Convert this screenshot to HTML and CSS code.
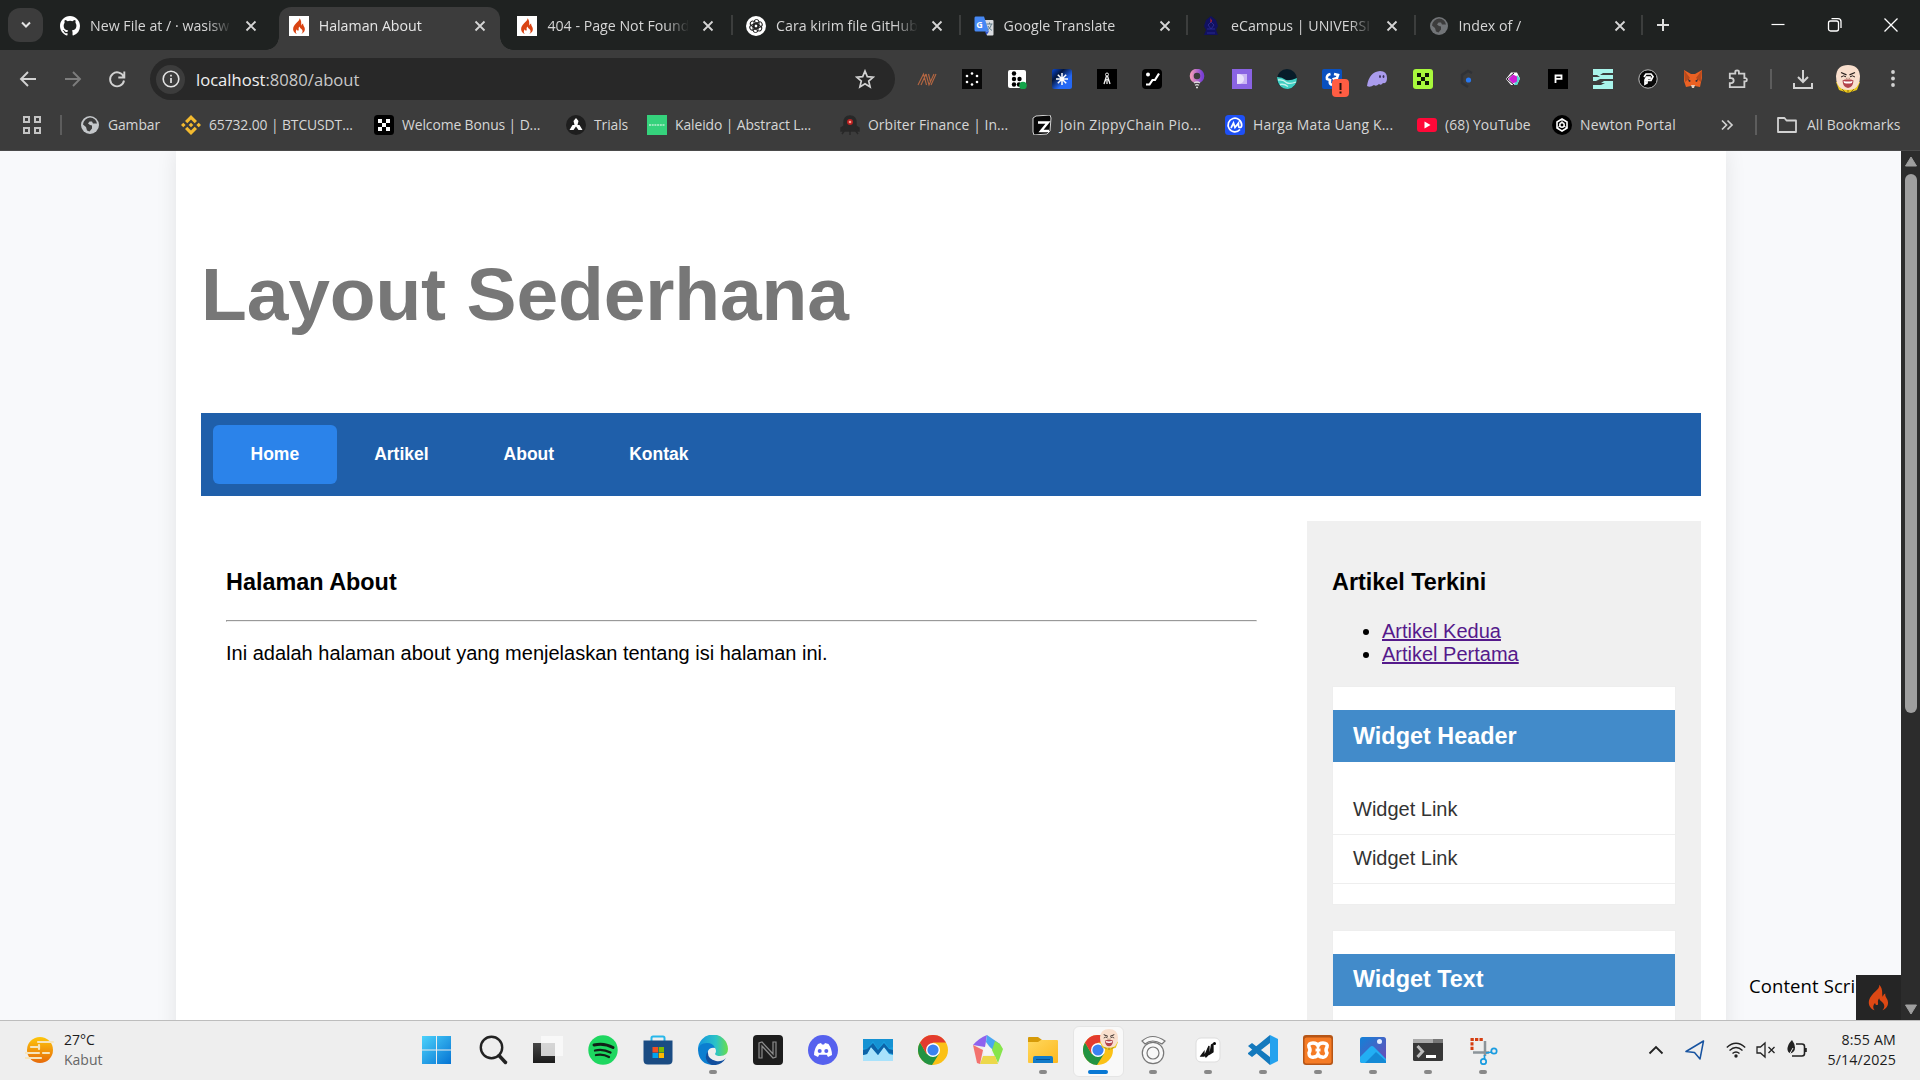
FILE: index.html
```html
<!DOCTYPE html>
<html lang="id">
<head>
<meta charset="utf-8">
<title>Halaman About</title>
<link rel="stylesheet" href="styles.css">
</head>
<body>
<svg class="defs" aria-hidden="true">
  <defs>
    <symbol id="x" viewBox="0 0 20 20"><path d="M5.500 5.500l9 9M14.500 5.500l-9 9" stroke="#d5d5d5" stroke-width="1.800" fill="none"/></symbol>
    <symbol id="flame" viewBox="0 0 20 20"><path d="M10.500.5C11.500 4 4.500 6.500 3 12 2.200 15.500 4 18.500 7.300 19.500 5.500 17.500 6 15.500 7.500 13.800 7.500 15 8.200 15.800 9.300 15.500 10.500 14.500 8.500 13 10.500 10.500 10.500 12.500 14.500 13.500 14.300 16.500 14.200 18 13.500 19 12.700 19.500 16 18.500 17.800 15.500 16.800 12.200 16.200 10.200 14.800 9.500 15 7 13.500 7.500 13.300 9 13.300 9.500 12 8 14 4 10.500.5z"/></symbol>
    <symbol id="fire" viewBox="0 0 20 20"><rect width="20" height="20" fill="#fff"/><use href="#flame" x="1.500" y="1.800" width="17" height="16.500" fill="#d94312"/></symbol>
    <symbol id="globe" viewBox="0 0 20 20"><circle cx="10" cy="10" r="9"/><path d="M10 2.500a7.500 7.500 0 0 1 7 6h-4l-1-2H9.500L8 8.500l2 1.500 2 .5v3l-2.500 3-2.500-1-1-3.500-3-2.500a7.500 7.500 0 0 1 7-7z" fill="#3c3c3c" fill-rule="evenodd"/></symbol>
    <symbol id="chrome" viewBox="0 0 30 30"><circle cx="15" cy="15" r="15" fill="#fbc116"/><path d="M2 7.500a15 15 0 0 0 12 22.500l7.200-11.500L8.500 18.800z" fill="#229342"/><path d="M15 7.500h13A15 15 0 0 0 2 7.500l6.500 11.300z" fill="#e33b2e"/><circle cx="15" cy="15" r="7" fill="#fff"/><circle cx="15" cy="15" r="5.600" fill="#3b82f0"/></symbol>
    <symbol id="face" viewBox="0 0 26 28"><path d="M1 17l3 8 9 3 9-3 3-8z" fill="#e9c71d"/><path d="M7 24l3 3M19 24l-3 3M13 24v4" stroke="#8d6f12"/><path d="M1 11Q2 0 13 0t12 11q0 10-6 13-6 2-12 0Q1 21 1 11z" fill="#f9dfcd"/><path d="M6 7.500l5.500 2.300M20 7.500l-5.500 2.300" stroke="#2a211e" stroke-width="1.300"/><path d="M6 12q2.500-2.200 5-.2M15 11.800q2.500-2 5 .2" stroke="#2a211e" fill="none"/><path d="M7.500 15.500l2.500-1h6l2.500 1q-.5 7-5.500 7.500-5-.5-5.500-7.500z" fill="#b4434d"/><path d="M8.500 16q4.500 1 9 0l-.6 2q-3.900 1-7.800 0z" fill="#fff"/><path d="M12 12.500l-.8 1.500h3.600l-.8-1.500" fill="none" stroke="#b78c78" stroke-width=".8"/></symbol>
    <linearGradient id="win" x1="0" y1="0" x2="1" y2="1"><stop stop-color="#4cd2fb"/><stop offset="1" stop-color="#0573d3"/></linearGradient>
    <linearGradient id="pin"><stop stop-color="#ec95bb"/><stop offset="1" stop-color="#7a3fd6"/></linearGradient>
    <linearGradient id="star" x1="0" y1="0" x2="1" y2="1"><stop stop-color="#0747d8"/><stop offset=".3" stop-color="#03163f"/><stop offset=".65" stop-color="#2468f5"/></linearGradient>
    <linearGradient id="sun" x1="0" y1="0" x2="0" y2="1"><stop stop-color="#fdc60b"/><stop offset="1" stop-color="#e66a0b"/></linearGradient>
    <linearGradient id="edge" x1="0" y1="0" x2="1" y2="0"><stop stop-color="#1494df"/><stop offset=".6" stop-color="#2bc3c7"/><stop offset="1" stop-color="#6ade49"/></linearGradient>
    <linearGradient id="photo" x1="0" y1="0" x2="1" y2="1"><stop stop-color="#1182d8"/><stop offset="1" stop-color="#7149b5"/></linearGradient>
    <linearGradient id="dark" x1="0" y1="0" x2="0" y2="1"><stop stop-color="#474747"/><stop offset="1" stop-color="#1b1b1b"/></linearGradient>
    <linearGradient id="folder" x1="0" y1="0" x2="1" y2="1"><stop stop-color="#ffd85e"/><stop offset="1" stop-color="#fdb81e"/></linearGradient>
  </defs>
</svg>

<header class="browser">
  <div class="tabstrip">
    <button class="tab-search"><svg width="16" height="16" viewBox="0 0 16 16"><path d="M4 5.500l4 4 4-4" fill="none" stroke="#e3e3e3" stroke-width="2"/></svg></button>
    <div class="tab"><svg class="fav" viewBox="0 0 16 16"><path fill="#fff" d="M8 0C3.580 0 0 3.580 0 8c0 3.540 2.290 6.530 5.470 7.590.4.070.55-.17.55-.38v-1.490c-2.010.37-2.530-.49-2.690-.94-.09-.23-.48-.94-.82-1.130-.28-.15-.68-.52-.01-.53.63-.01 1.080.58 1.230.82.72 1.210 1.870.87 2.330.66.07-.52.28-.87.51-1.070-1.780-.2-3.640-.89-3.640-3.950 0-.87.31-1.590.82-2.150-.08-.2-.36-1.020.08-2.120 0 0 .67-.21 2.200.82a7.600 7.600 0 0 1 4 0c1.530-1.040 2.200-.82 2.200-.82.44 1.100.16 1.920.08 2.120.51.56.82 1.270.82 2.150 0 3.070-1.870 3.750-3.650 3.950.29.25.54.73.54 1.480v2.200c0 .21.15.46.55.38A8 8 0 0 0 16 8c0-4.420-3.580-8-8-8z"/></svg><span class="tab-title">New File at / · wasisw</span><svg class="close"><use href="#x"/></svg></div>
    <div class="tab active"><svg class="fav"><use href="#fire"/></svg><span class="tab-title">Halaman About</span><svg class="close"><use href="#x"/></svg></div>
    <div class="tab"><svg class="fav"><use href="#fire"/></svg><span class="tab-title">404 - Page Not Found</span><svg class="close"><use href="#x"/></svg></div>
    <div class="tab divided"><svg class="fav" viewBox="0 0 20 20"><circle cx="10" cy="10" r="10" fill="#fff"/><g fill="none" stroke="#222" stroke-width="1"><rect id="petal" x="8" y="3.500" width="5" height="9" rx="2.500"/><use href="#petal" transform="rotate(60 10 10)"/><use href="#petal" transform="rotate(120 10 10)"/><use href="#petal" transform="rotate(180 10 10)"/><use href="#petal" transform="rotate(240 10 10)"/><use href="#petal" transform="rotate(300 10 10)"/></g></svg><span class="tab-title">Cara kirim file GitHub</span><svg class="close"><use href="#x"/></svg></div>
    <div class="tab divided"><svg class="fav" viewBox="0 0 20 20"><path d="M8 4h10.500q1 0 1 1v13.500q0 1-1 1H13z" fill="#dadce0"/><path d="M1.500.5H10l5 15H2q-1.500 0-1.500-1.500V2Q.5.500 1.500.5z" fill="#4688f4"/><path d="M11 15.500h4L12.500 19z" fill="#3153c9"/><text x="2.300" y="11.500" font-family="Open Sans, sans-serif" font-weight="700" font-size="9" fill="#fff">G</text><path d="M12.500 8h6M15.500 6.500V8M17.500 8q-.5 4-4 6M14 10q1.500 3 4 4.500" stroke="#607d8b" fill="none"/></svg><span class="tab-title">Google Translate</span><svg class="close"><use href="#x"/></svg></div>
    <div class="tab divided"><svg class="fav" viewBox="0 0 20 20"><path d="M10 0l5 4 2 6-2 4 2 5H3l2-5-2-4 2-6z" fill="#111160"/><path d="M6 13h8M6 17h8M7 9l3-3 3 3-3 4z" stroke="#292990" fill="none"/><path d="M9.500 2l1.500 3-1.500 2z" fill="#c52525"/></svg><span class="tab-title">eCampus | UNIVERSI</span><svg class="close"><use href="#x"/></svg></div>
    <div class="tab divided"><svg class="fav" fill="#727578"><use href="#globe"/></svg><span class="tab-title">Index of /</span><svg class="close"><use href="#x"/></svg></div>
    <div class="new-tab"><svg width="16" height="16" viewBox="0 0 16 16"><path d="M8 2v12M2 8h12" stroke="#dedede" stroke-width="2"/></svg></div>
    <div class="window-controls">
      <svg viewBox="0 0 16 16"><path d="M1.500 7.500h13" stroke="#fff" stroke-width="1.200"/></svg>
      <svg viewBox="0 0 16 16"><rect x="1.500" y="4" width="10" height="10" rx="2" fill="none" stroke="#fff" stroke-width="1.300"/><path d="M4.500 1.600h6.500q3 0 3 3v6.500" fill="none" stroke="#fff" stroke-width="1.300"/></svg>
      <svg viewBox="0 0 16 16"><path d="M1.500 1.500l13 13M14.500 1.500l-13 13" stroke="#fff" stroke-width="1.300"/></svg>
    </div>
  </div>

  <div class="toolbar">
    <div class="nav-buttons">
      <svg viewBox="0 0 20 20"><path d="M18 10H3.500M10 3l-7 7 7 7" fill="none" stroke="#d2d2d2" stroke-width="1.900"/></svg>
      <svg viewBox="0 0 20 20"><path d="M2 10h14.500M10 3l7 7-7 7" fill="none" stroke="#7d7d7d" stroke-width="1.900"/></svg>
      <svg viewBox="0 0 20 20"><path d="M16.700 8A7 7 0 1 0 17 11.500M17.300 2.500v6h-6" fill="none" stroke="#d2d2d2" stroke-width="1.900"/></svg>
    </div>
    <div class="omnibox">
      <span class="site-info"><svg width="20" height="20" viewBox="0 0 20 20"><circle cx="10" cy="10" r="7.800" fill="none" stroke="#e3e3e3" stroke-width="1.600"/><path d="M10 9v5M10 5.800v1.700" stroke="#e3e3e3" stroke-width="1.700"/></svg></span>
      <span class="url"><b>localhost</b>:8080/about</span>
      <svg class="bookmark-star" width="20" height="20" viewBox="0 0 20 20"><path d="M10 2l2.300 5.600 6 .5-4.600 3.900 1.400 5.900L10 14.700l-5.100 3.200L6.300 12 1.700 8.100l6-.5z" fill="none" stroke="#d2d2d2" stroke-width="1.700"/></svg>
    </div>
    <div class="extensions">
      <svg viewBox="0 0 20 20"><path d="M1 16L6.500 5l3 11M4 16L9 5M9 5l3 11 5-11M11.500 5l2 8M14 16l5-11" fill="none" stroke="#b56742" stroke-width="1.100"/></svg>
      <svg viewBox="0 0 20 20"><rect width="20" height="20" fill="#080808"/><g fill="#fff"><circle cx="10" cy="4.500" r="1.300"/><circle cx="5" cy="7" r="1.300"/><circle cx="15" cy="7" r="1.300"/><circle cx="5" cy="13" r="1.300"/><circle cx="15" cy="13" r="1.300"/><circle cx="10" cy="15.500" r="1.300"/></g></svg>
      <svg viewBox="0 0 20 20"><rect x="1" y="1" width="18" height="18" rx="2" fill="#fff"/><g fill="#000"><circle cx="7" cy="4.500" r="2.200"/><circle cx="7" cy="10" r="2.200"/><circle cx="12.500" cy="10" r="2.200"/><circle cx="7" cy="15.500" r="2.200"/><circle cx="12" cy="15.500" r="2.200"/></g><circle cx="16" cy="16.500" r="3.800" fill="#14a34a"/></svg>
      <svg viewBox="0 0 20 20"><rect width="20" height="20" rx="2.500" fill="url(#star)"/><path d="M10 4v12M4 10h12M5.800 5.800l8.400 8.400M14.200 5.800l-8.400 8.400" stroke="#fff" stroke-width="1.500"/></svg>
      <svg viewBox="0 0 20 20"><rect width="20" height="20" fill="#000"/><circle cx="10" cy="5.500" r="1.500" fill="none" stroke="#eee"/><path d="M9.500 7L7 15M10.500 7l2.500 8M8 12l2-1.500 2 1.500M10 12v3" stroke="#eee" stroke-width="1.300" fill="none"/></svg>
      <svg viewBox="0 0 20 20"><rect width="20" height="20" rx="4" fill="#000"/><circle cx="6" cy="5.500" r="2" fill="#fff"/><path d="M4 15.500h3.500l3-4.500H13l4-6.500" stroke="#fff" stroke-width="2.200" fill="none"/></svg>
      <svg viewBox="0 0 20 20"><circle cx="10" cy="7" r="5.300" fill="none" stroke="url(#pin)" stroke-width="4"/><path d="M7 14q3-2 6 0M8 16.300q2-1.200 4 0M9 18.500h2" stroke="#ddd" stroke-width="1.300" fill="none"/></svg>
      <svg viewBox="0 0 20 20"><rect width="20" height="20" fill="#8a63e3"/><path d="M5 5h10v10H5z" fill="#cbb6f4"/><path d="M5 5q7 0 7 5t-7 5z" fill="#e9e0fb"/></svg>
      <svg viewBox="0 0 20 20"><circle cx="10" cy="10" r="10" fill="#071c29"/><path d="M0 8q5 0 9 3 4 1 11-2 0 9-9 11Q1 20 0 8z" fill="#3fcfc2"/><path d="M1 11q5-1 9 3 4 1 9-1M3 15.500q4-1 8 2" stroke="#c7f3ec" fill="none" stroke-width="1.300"/></svg>
      <svg class="wide" viewBox="0 0 28 28"><rect x="1" y="0" width="20" height="20" rx="2" fill="#0950bf"/><path d="M9.500 5Q5 6 6 10l3 1q-1 4 2 5M13 5l4 1-1 3-3 1 2 3" fill="none" stroke="#fff" stroke-width="2.600"/><rect x="11" y="10" width="17" height="18" rx="4" fill="#ff5d43"/><path d="M19.500 14v7M19.500 22.500v2" stroke="#27120e" stroke-width="2"/></svg>
      <svg viewBox="0 0 20 20"><path d="M0 17Q2 3 13 2q7 0 7 7 0 6-4 5-2 3-4 1-3 3-5 1-4 3-7 1z" fill="#aa9ced"/><ellipse cx="13" cy="7.500" rx=".9" ry="1.600" fill="#3a3159"/><ellipse cx="16.500" cy="7.500" rx=".9" ry="1.600" fill="#3a3159"/></svg>
      <svg viewBox="0 0 20 20"><rect width="20" height="20" rx="3" fill="#a8f93c"/><path d="M4 4h4v4h4V4h4v4h-4v4h4v4h-4v-4H8v4H4v-4h4V8H4z" fill="#0c1707"/></svg>
      <svg viewBox="0 0 20 20"><path d="M14 4l-4-2-6 4v8l6 4" stroke="#303236" stroke-width="2.500" fill="none"/><circle cx="10.500" cy="11" r="2.600" fill="#2878f0"/></svg>
      <svg viewBox="0 0 20 20"><path d="M8 3.500h6l3 6-3 6.500H8l-5-6z" fill="#fff"/><path d="M14 6l3 3.500-3 6.500h-3z" fill="#55d9cf"/><path d="M10 5.500l4 2v5L10 14.500l-4.500-4.500z" fill="#ce20d4"/><path d="M11 4L4 10l7 6" fill="none" stroke="#241028" stroke-width="1"/></svg>
      <svg viewBox="0 0 20 20"><rect width="20" height="20" fill="#000"/><path d="M7.500 14V6.500h6v3.300h-6" fill="none" stroke="#fff" stroke-width="1.800"/></svg>
      <svg viewBox="0 0 20 20"><path d="M0 0h20v4H10l-3 2h13v4H7l-4 2H0V8h7L4 6H0zM0 16h8l4-2H8l3-2h9v8H0z" fill="#a9f4eb"/></svg>
      <svg viewBox="0 0 20 20"><circle cx="10" cy="10" r="9.200" fill="#080808" stroke="#bcbcbc"/><path d="M6 8l2-3h5l2 2.500-2 4H8.500l1-2H12V8H8.500L7 11v4l2-1v-2" fill="none" stroke="#fff" stroke-width="1.700"/></svg>
      <svg viewBox="0 0 20 20"><path d="M1 1l7 4h4l7-4v8l-1 4-1 5-5-1h-4l-5 1-2-6z" fill="#eb6123"/><path d="M1 1l6 8-5 4zM19 1l-6 8 5 4z" fill="#b84a1d"/><path d="M5 10l3 2-2 1zM15 10l-3 2 2 1z" fill="#232b3a"/><path d="M8 16h4l-1 3H9z" fill="#e5cdbb"/></svg>
      <svg viewBox="0 0 22 22"><path d="M2 5h6V3q0-1.500 2-1.500T12 3v2h6v5h1.200q1.600 0 1.600 1.800t-1.600 1.800H18V20H2v-4.500h1.500a2.700 2.700 0 0 0 0-5.500H2z" fill="none" stroke="#cfcfcf" stroke-width="2"/></svg>
    </div>
    <span class="bar-line"></span>
    <div class="toolbar-end">
      <svg viewBox="0 0 20 20"><path d="M10 1v12M5 8l5 5 5-5M1 14v5h18v-5" fill="none" stroke="#d2d2d2" stroke-width="2"/></svg>
      <svg class="avatar"><use href="#face"/></svg>
      <svg viewBox="0 0 20 20" fill="#d2d2d2"><circle cx="10" cy="3" r="1.900"/><circle cx="10" cy="9.500" r="1.900"/><circle cx="10" cy="16" r="1.900"/></svg>
    </div>
  </div>

  <div class="bookmarks">
    <svg class="apps" viewBox="0 0 20 20"><path d="M2 2h5v5H2zM13 2h5v5h-5zM2 13h5v5H2zM13 13h5v5h-5z" fill="none" stroke="#c4c4c4" stroke-width="2"/></svg>
    <span class="bar-line"></span>
    <div class="bookmark"><svg fill="#c4c7ca"><use href="#globe"/></svg><span>Gambar</span></div>
    <div class="bookmark"><svg viewBox="0 0 20 20" fill="#f3ba2f"><path d="M10 0l6 6-2.300 2.300L10 4.600 6.300 8.300 4 6zM2.300 7.700L4.600 10l-2.300 2.300L0 10zM17.700 7.700L20 10l-2.300 2.300-2.300-2.300zM10 7.700l2.300 2.300-2.300 2.300L7.700 10zM10 20l6-6-2.300-2.300-3.700 3.700-3.700-3.700L4 14z"/></svg><span>65732.00 | BTCUSDT...</span></div>
    <div class="bookmark"><svg viewBox="0 0 20 20"><rect width="20" height="20" rx="3.500" fill="#000"/><path d="M4 4h4v4h4V4h4v4h-4v4h4v4h-4v-4H8v4H4v-4h4V8H4z" fill="#fff"/></svg><span>Welcome Bonus | D...</span></div>
    <div class="bookmark"><svg viewBox="0 0 20 20"><circle cx="10" cy="10" r="10" fill="#1e1e1e"/><path d="M10 3l2.500 3-1 4h2l3 5h-4l-2.500-3.500L7.500 15h-4l3-5h2l-1-4z" fill="#fff"/></svg><span>Trials</span></div>
    <div class="bookmark"><svg viewBox="0 0 20 20"><rect width="20" height="20" fill="#35d27c"/><path d="M2 10h16" stroke="#b8f0d0" stroke-width="1.500" stroke-dasharray="2 .7"/></svg><span>Kaleido | Abstract L...</span></div>
    <div class="bookmark"><svg viewBox="0 0 20 20"><path d="M4 11V8q0-7 6-7t6 7v3l3 2v3H1v-3zM5 15l-3 4M10 15v5M15 15l3 4" fill="#282828" stroke="#282828" stroke-width="1.500"/><circle cx="10" cy="7" r="3" fill="#b82020"/><circle cx="10" cy="7" r="1.300" fill="#ff9c8e"/></svg><span class="wide-1">Orbiter Finance | In...</span></div>
    <div class="bookmark"><svg viewBox="0 0 20 20"><path d="M1 3l3-2 14-1 1 3-1 13-3 3-13 1-1-3z" fill="#080808" stroke="#d2d2d2"/><path d="M6 7.500h10L9 16h8" stroke="#fff" stroke-width="2.400" fill="none"/></svg><span class="wide-3">Join ZippyChain Pio...</span></div>
    <div class="bookmark"><svg viewBox="0 0 20 20"><rect width="20" height="20" rx="3.500" fill="#1e50f5"/><path d="M15 14.500A6.800 6.800 0 1 1 16.700 10q0 2.500-1.800 2.500-1.400 0-1.400-2V8L10 12.500 8.500 8 6 13" fill="none" stroke="#fff" stroke-width="1.700"/></svg><span class="wide-2">Harga Mata Uang K...</span></div>
    <div class="bookmark"><svg viewBox="0 0 20 20"><rect y="3" width="20" height="14" rx="3" fill="#ff0838"/><path d="M7.500 6.500l6 3.500-6 3.500z" fill="#fff"/></svg><span class="wide-1">(68) YouTube</span></div>
    <div class="bookmark"><svg viewBox="0 0 20 20"><circle cx="10" cy="10" r="10" fill="#000"/><path d="M10 4l5 3v6l-5 3-5-3V7z" fill="none" stroke="#fff" stroke-width="1.600"/><circle cx="10" cy="10" r="2.200" fill="none" stroke="#fff" stroke-width="1.500"/><path d="M10 4v4M5 13l3-2M15 13l-3-2" stroke="#fff"/></svg><span class="wide-2">Newton Portal</span></div>
    <svg class="more" viewBox="0 0 14 14"><path d="M2 2.500L6.500 7 2 11.500M7.500 2.500L12 7l-4.500 4.500" fill="none" stroke="#d2d2d2" stroke-width="1.700"/></svg>
    <span class="bar-line"></span>
    <div class="bookmark all"><svg viewBox="0 0 20 20"><path d="M1 3h6.500l2 2.500H19V17H1z" fill="none" stroke="#d2d2d2" stroke-width="1.800" stroke-linejoin="round"/></svg><span class="wide-1">All Bookmarks</span></div>
  </div>
</header>

<div class="viewport">
  <div class="page">
    <div class="container">
      <div class="site-header"><h1>Layout Sederhana</h1></div>
      <nav class="site-nav">
        <a class="current">Home</a><a>Artikel</a><a>About</a><a>Kontak</a>
      </nav>
      <div class="columns">
        <section class="main">
          <h3>Halaman About</h3>
          <hr>
          <p>Ini adalah halaman about yang menjelaskan tentang isi halaman ini.</p>
        </section>
        <aside class="sidebar">
          <h3>Artikel Terkini</h3>
          <ul class="recent">
            <li><a>Artikel Kedua</a></li>
            <li><a>Artikel Pertama</a></li>
          </ul>
          <div class="widget">
            <h3>Widget Header</h3>
            <ul>
              <li>Widget Link</li>
              <li>Widget Link</li>
            </ul>
          </div>
          <div class="widget">
            <h3>Widget Text</h3>
          </div>
        </aside>
      </div>
    </div>
    <div class="script-note">Content Script</div>
    <div class="debug-button"><svg width="27" height="27" fill="#dd4814"><use href="#flame"/></svg></div>
  </div>
  <div class="scrollbar">
    <svg width="14" height="12" viewBox="0 0 14 12"><path d="M7 1l5.500 9h-11z" fill="#9f9f9f" stroke="#9f9f9f" stroke-linejoin="round"/></svg>
    <div class="thumb"></div>
    <svg class="down" width="14" height="12" viewBox="0 0 14 12"><path d="M7 11l5.500-9h-11z" fill="#9f9f9f" stroke="#9f9f9f" stroke-linejoin="round"/></svg>
  </div>
</div>

<footer class="taskbar">
  <div class="weather">
    <svg width="30" height="28" viewBox="0 0 30 28"><circle cx="15" cy="14" r="13" fill="url(#sun)"/><path d="M13 6h15M6 11h8M0 17h14M0 22h16M18 17h6M14 9v4" stroke="#f5e5bd" stroke-width="2.200" stroke-linecap="round"/></svg>
    <div><div>27°C</div><div class="muted">Kabut</div></div>
  </div>
  <div class="apps-row">
    <div class="app"><svg viewBox="0 0 30 30"><path d="M0 1h14v13.500H0zM15 1h14v13.500H15zM0 15.500h14V29H0zM15 15.500h14V29H15z" fill="url(#win)"/></svg></div>
    <div class="app"><svg viewBox="0 0 30 30"><circle cx="13.500" cy="12.500" r="10.700" fill="none" stroke="#222" stroke-width="2.400"/><path d="M21 20.500l6.500 7" stroke="#222" stroke-width="3.500" stroke-linecap="round"/></svg></div>
    <div class="app"><svg viewBox="0 0 30 30"><path d="M0 8h22v20H0z" fill="url(#dark)"/><path d="M8 1h22v20H8z" fill="#fafafa" opacity=".8"/></svg></div>
    <div class="app"><svg viewBox="0 0 30 30"><circle cx="15" cy="15" r="14.700" fill="#1ed760"/><path d="M6 10q10-2.500 19 2.500" stroke="#102117" stroke-width="3" fill="none" stroke-linecap="round"/><path d="M7 15.500q8-2 15.500 2M8 20q7-1.500 13 2" stroke="#102117" stroke-width="2.300" fill="none" stroke-linecap="round"/></svg></div>
    <div class="app"><svg viewBox="0 0 30 30"><path d="M8.500 7V3q0-1.500 1.500-1.500h10q1.500 0 1.500 1.500v4" fill="none" stroke="#27b7ea" stroke-width="2"/><path d="M.5 5.500h29V25q0 4.500-4.500 4.500H5Q.5 29.500.5 25z" fill="#1b4c83"/><path d="M9.500 12H15v5.500H9.500z" fill="#f25022"/><path d="M15.700 12H21v5.500h-5.300z" fill="#7fba00"/><path d="M9.500 18H15v5H9.500z" fill="#00a4ef"/><path d="M15.700 18H21v5h-5.300z" fill="#ffb900"/></svg></div>
    <div class="app open"><svg viewBox="0 0 30 30"><path d="M0 15A15 15 0 0 1 30 14q0 7-8 7-4 0-5-2 2-3 0-6-5-7-17 2z" fill="url(#edge)"/><path d="M0 15q1-7 9-7 6 0 8 5-5-1-7 3-3 8 6 14Q1 30 0 15z" fill="#0b7ed0"/><path d="M10 16q-1 8 8 10 6 1 10-3-5 8-14 7Q4 25 10 16z" fill="#114f9e"/></svg></div>
    <div class="app"><svg viewBox="0 0 30 30"><rect width="30" height="30" rx="4" fill="#1d1d1d"/><path d="M6 23V8l3-1 11 12V7h3v15l-3 1L9 11v12z" fill="#222" stroke="#8c8c8c" stroke-width="1.200"/></svg></div>
    <div class="app"><svg viewBox="0 0 30 30"><circle cx="15" cy="15" r="15" fill="#5661ee"/><path d="M10 9l3-1 1 1.500h2L17 8l3.500 1Q24 14 24 20l-4 2-1.200-2.200h-7.600L10 22l-4-2q0-6 4-11z" fill="#fff"/><circle cx="11.700" cy="16" r="2" fill="#5661ee"/><circle cx="18.300" cy="16" r="2" fill="#5661ee"/></svg></div>
    <div class="app"><svg viewBox="0 0 30 30"><rect y="4" width="30" height="22" rx="1" fill="#1aa0df"/><path d="M0 4h30v8l-4 1-5-7-6 8-5-8-6 8-4-1z" fill="#1592d3"/><path d="M0 20l4-1 4-7 7 8 6-8 5 7 4 1v6H0z" fill="#a9e2fb"/><path d="M0 15l4-1 6-6 5 7 6-7 5 6 4 1v4l-4-1-5-6-6 8-7-8-4 7-4 1z" fill="#0d63a8"/></svg></div>
    <div class="app"><svg><use href="#chrome"/></svg></div>
    <div class="app"><svg viewBox="0 0 30 30"><path d="M14 0l-2 12-12-2q6-7 14-10z" fill="#8e62ef"/><path d="M14 0l13 9-8 6-6-8z" fill="#49a7f1"/><path d="M27 9l3 5-5 14-6-13 3-9z" fill="#86e54b"/><path d="M7 29l3-8 12 0 3 8z" fill="#ecd84b"/><path d="M0 10l10 5-3 14-3-1z" fill="#f3726e"/><path d="M14 10l5 4-1 6h-7l-1-6z" fill="#f5f5f5"/></svg></div>
    <div class="app open"><svg viewBox="0 0 30 30"><path d="M0 3q0-1 1-1h9l4 3v4H0z" fill="#d69a08"/><path d="M0 7h10l3-2h16q1 0 1 1v21q0 1-1 1H1q-1 0-1-1z" fill="url(#folder)"/><path d="M5 28v-5q0-2 2-2h16q2 0 2 2v5z" fill="#127bc9"/><path d="M8 24.500h14" stroke="#075293"/></svg></div>
    <div class="app current"><svg viewBox="0 0 36 36"><use href="#chrome" x="0" y="6" width="30" height="30"/><use href="#face" x="16" y="0" width="20" height="21"/></svg></div>
    <div class="app open"><svg viewBox="0 0 30 30"><g fill="#f8f8f8" stroke="#777" stroke-width="1.200"><path d="M4 6Q14-3 27 6l-3 3Q14 3 7 9z"/><circle cx="15" cy="18" r="10.700"/><circle cx="15" cy="18" r="6"/></g></svg></div>
    <div class="app open"><svg viewBox="0 0 30 30"><rect x="3" y="3" width="24" height="24" rx="5" fill="#fff" stroke="#ddd"/><path d="M8 21l3-4v4zM12 20l4-9v8l-3 3zM17 19l1.500-9 1.500-1v8z" fill="#111" stroke="#111" stroke-width="1.300"/><circle cx="21.500" cy="8.500" r="1.500"/></svg></div>
    <div class="app open"><svg viewBox="0 0 30 30"><path d="M22 0l8 4v22l-8 4z" fill="#25a2ee"/><path d="M22 0v8L4 22l-4-3v-1zM0 11l4-3 18 14v8z" fill="#1479bd"/></svg></div>
    <div class="app open"><svg viewBox="0 0 30 30"><rect width="30" height="30" rx="3" fill="#b65516"/><rect x="1.500" y="2.500" width="27" height="26" rx="2" fill="#f57b25"/><path d="M10 8q4 0 5 3 1-3 5-3 5 0 4 4-2 3 0 6-1 5-5 4-3 0-4-3-1 3-4 3-5 1-5-4 2-3 0-6-1-4 4-4z" fill="none" stroke="#fff" stroke-width="3.500"/><path d="M12.500 15h5" stroke="#fff" stroke-width="3"/></svg></div>
    <div class="app open"><svg viewBox="0 0 30 30"><rect x="2" y="2" width="26" height="26" rx="2.500" fill="url(#photo)"/><circle cx="21.500" cy="6.500" r="2.500" fill="#e4edff"/><path d="M2 22l10-10q2-2 4 0l12 12v2q0 2-2 2H4q-2 0-2-2z" fill="#22aff4"/><path d="M7 28l11-11 10 9v2z" fill="#1489d5"/></svg></div>
    <div class="app open"><svg viewBox="0 0 30 30"><rect y="4" width="30" height="22" rx="1.500" fill="#373737"/><path d="M0 4h30v4H0z" fill="#aaa"/><path d="M20 4h10v4H20z" fill="#777"/><path d="M4.500 11l5 5.500-5 5.500" fill="none" stroke="#bbb" stroke-width="3"/><path d="M13 21.500h10" stroke="#fff" stroke-width="3"/></svg></div>
    <div class="app open"><svg viewBox="0 0 30 30"><path d="M4 15V4.500h12" fill="none" stroke="#d53d10" stroke-width="3" stroke-dasharray="3.300 1.200"/><path d="M17 6v15M5 17.500h16" stroke="#8c9499" stroke-width="2.500"/><g fill="none" stroke="#1a9ce0" stroke-width="1.700"><circle cx="26" cy="16" r="2.700"/><circle cx="15.500" cy="26.500" r="2.700"/><path d="M18 18l6-1M16.500 20v4"/></g></svg></div>
  </div>
  <div class="tray">
    <svg viewBox="0 0 20 20"><path d="M3.500 13.500L10 7l6.500 6.500" fill="none" stroke="#222" stroke-width="1.800"/></svg>
    <svg viewBox="0 0 20 20"><path d="M18.500 1L1 11.500l8.500 1L15 19z" fill="none" stroke="#1753a0" stroke-width="1.500" stroke-linejoin="round"/></svg>
    <svg viewBox="0 0 20 20"><path d="M.8 7.500q9.200-8.500 18.400 0M3.500 10.500q6.500-6 13 0M6.500 13.500q3.500-3 7 0" fill="none" stroke="#222" stroke-width="1.400"/><circle cx="10" cy="16" r="1.700" fill="#222"/></svg>
    <svg viewBox="0 0 20 20"><path d="M1 7h3.500L9 3v14l-4.500-4H1zM12.500 7l6 6M18.500 7l-6 6" fill="none" stroke="#222" stroke-width="1.300"/></svg>
    <svg viewBox="0 0 20 20"><path d="M9 4h6q2.500 0 2.500 2.500v7Q17.500 16 15 16H5M19 8v4" fill="none" stroke="#222" stroke-width="1.600"/><path d="M5 0Q0 5 .5 10q.5 3 3 3.500Q8 12 8 7.500 8 4 5 0z" fill="#222"/><path d="M1 17l5-9" stroke="#eee"/></svg>
    <div class="clock"><div>8:55 AM</div><div>5/14/2025</div></div>
  </div>
</footer>
</body>
</html>
```

FILE: styles.css
```css
* { box-sizing: border-box; }
body {
  margin: 0;
  width: 1920px;
  height: 1080px;
  overflow: hidden;
  display: flex;
  flex-direction: column;
  font-family: "Open Sans", "Noto Sans", sans-serif;
}
svg { display: block; flex: none; }
.defs { position: absolute; width: 0; height: 0; }

/* Browser frame */
.browser { height: 151px; background: #3c3c3c; color: #d6d6d6; border-bottom: 1px solid #4a4a4a; }
.tabstrip { display: flex; height: 50px; padding-left: 8px; background: #1f2221; }
.tab-search {
  width: 35px; height: 34px; margin: 8px 7px 0 0; padding: 0;
  border: 0; border-radius: 12px; background: #3c3c3c;
  display: grid; place-items: center;
}
.tab {
  position: relative; flex: none;
  width: 227.500px; height: 50px; padding: 1px 0 0 10px;
  display: flex; align-items: center;
  font-size: 14.200px;
}
.tab:nth-child(-n+4) { width: 228.700px; }
.fav { width: 20px; height: 20px; margin-right: 10px; }
.tab-title {
  flex: none; width: 145px; overflow: hidden; white-space: nowrap;
  mask-image: linear-gradient(90deg, #000 118px, transparent 142px);
}
.close { width: 20px; height: 20px; margin-left: 6px; }
.tab.active { color: #e6e6e6; }
.tab.active::before {
  content: ""; position: absolute; z-index: 0;
  left: 0; top: 7px; width: 221px; height: 43px;
  background: #3c3c3c; border-radius: 12px 12px 0 0;
}
.tab.active::after {
  content: ""; position: absolute; left: -13px; bottom: 0; width: 247px; height: 13px;
  background:
    radial-gradient(circle at 0 0, transparent 12.500px, #3c3c3c 13px) left / 13px 13px no-repeat,
    radial-gradient(circle at 100% 0, transparent 12.500px, #3c3c3c 13px) right / 13px 13px no-repeat;
}
.tab.active > * { position: relative; z-index: 1; }
.tab.divided::before {
  content: ""; position: absolute; left: -5px; top: 15px;
  width: 2px; height: 20px; background: #3c3e3d;
}
.new-tab { position: relative; width: 34px; height: 50px; display: grid; place-items: center; }
.new-tab::before { content: ""; position: absolute; left: -5px; top: 15px; width: 2px; height: 20px; background: #3c3e3d; }
.window-controls { margin-left: auto; display: flex; align-items: center; gap: 40.500px; padding-right: 21px; height: 49px; }
.window-controls svg { width: 16px; height: 16px; }

.toolbar { display: flex; align-items: center; height: 58px; padding-left: 18px; }
.nav-buttons { display: flex; gap: 24.500px; width: 132px; }
.nav-buttons svg { width: 20px; height: 20px; }
.omnibox {
  width: 745px; height: 42px; border-radius: 21px; background: #282828;
  display: flex; align-items: center; padding: 0 20px 0 6px;
  font-size: 16.600px; color: #c9c9c9;
}
.site-info { width: 29px; height: 29px; border-radius: 50%; background: #3c3c3c; display: grid; place-items: center; }
.url { margin-left: 11px; }
.url b { font-weight: 400; color: #f0f0f0; }
.bookmark-star { margin-left: auto; }
.extensions { display: flex; gap: 25.060px; margin-left: 22px; align-items: center; }
.extensions svg { width: 20px; height: 20px; }
.extensions svg.wide { width: 28px; height: 28px; margin: 8px -7px 0 -1px; }
.bar-line { width: 2px; height: 20px; background: #5d5d5d; }
.extensions + .bar-line { margin-left: 22px; }
.toolbar-end { display: flex; align-items: center; gap: 22px; margin-left: 21px; }
.toolbar-end svg { width: 20px; height: 20px; }
.toolbar-end svg.avatar { width: 26px; height: 28px; }

.bookmarks {
  display: grid; align-items: center; height: 33px;
  grid-template-columns: 38px 20px 101px 193px 192px 81px 193px 192px 193px 192px 135px 168px 35px 21px 142px;
  padding-left: 22px; font-size: 13.900px; letter-spacing: -0.1px;
}
.bookmark { display: flex; align-items: center; gap: 8px; white-space: nowrap; }
.bookmark.all { gap: 10px; padding-left: 1px; }
.bookmark svg { width: 20px; height: 20px; }
.bookmark .wide-1 { letter-spacing: 0.07px; }
.bookmark .wide-2 { letter-spacing: 0.22px; }
.bookmark .wide-3 { letter-spacing: 0.3px; }
.apps { width: 20px; height: 20px; }
.more { width: 14px; height: 14px; }

/* Web page */
.viewport { display: flex; height: 869px; overflow: hidden; }
.page {
  position: relative; width: 1901px; padding-left: 176px;
  background: #f8f9fb; color: #000;
  font: 20px/23px "Liberation Sans", Arial, sans-serif;
}
.container { width: 1550px; height: 1100px; padding: 0 25px; background: #fff; box-shadow: 0 0 20px rgba(0, 0, 0, .09); }
.site-header { height: 262px; padding-top: 100px; }
h1 { margin: 0; font-size: 75px; line-height: 86px; letter-spacing: -0.15px; color: #777; }
.site-nav { display: flex; height: 83px; padding: 12px; background: #1f5faa; }
.site-nav a {
  height: 59px; padding: 0 37.500px; border-radius: 6px;
  font-size: 17.500px; font-weight: 700; line-height: 58px; color: #fff;
}
.site-nav a.current { background: #2b83ea; }
.columns { display: grid; grid-template-columns: 1081px 394px; gap: 25px; margin-top: 25px; }
.main { padding: 0 25px; }
.main, .sidebar { padding-top: 25px; }
h3 { margin: 23.400px 0; font-size: 23.400px; line-height: 27px; }
hr { margin: 10px 0; border: 1px solid #999; border-bottom-color: #eee; border-right-color: #eee; }
.main p { margin: 20px 0; }
.sidebar { height: 900px; padding-left: 25px; padding-right: 25px; background: #f0f0f0; }
.recent { margin: 20px 0; padding-left: 50px; }
.recent a { color: #551a8b; text-decoration: underline; }
.widget { display: flow-root; margin-bottom: 25px; border: 1px solid #eee; background: #fff; }
.widget h3 { padding: 12.500px 20px; background: #428bca; color: #fff; }
.widget ul { list-style: none; margin: 0 0 20px; padding: 0; }
.widget li { padding: 12.500px 20px; border-bottom: 1px solid #eee; color: #333; }
.script-note {
  position: absolute; left: 1749px; top: 822px; white-space: nowrap;
  font: 18.500px/26px "Open Sans", "Noto Sans", sans-serif; letter-spacing: 0.1px;
}
.debug-button {
  position: absolute; right: 0; bottom: 0; width: 45px; height: 45px;
  background: #252525; display: grid; place-items: center;
}
.scrollbar { width: 19px; padding: 5px 2px 5px 3px; background: #2c2c2c; display: flex; flex-direction: column; }
.thumb { width: 12px; height: 539px; margin: 6px 0 0 1px; border-radius: 6px; background: #9f9f9f; }
.scrollbar .down { margin-top: auto; }

/* Taskbar */
.taskbar {
  display: flex; height: 60px; border-top: 1px solid #bdbdbd; background: #eee;
  font-size: 14px; line-height: 20px; color: #1c1c1c;
}
.weather { display: flex; align-items: center; gap: 9px; width: 410px; padding: 0 0 2px 25px; }
.muted { color: #666; }
.apps-row { display: flex; }
.app { position: relative; width: 55px; padding-bottom: 2px; display: grid; place-items: center; }
.app svg { width: 30px; height: 30px; }
.app:first-child svg { margin-left: -1px; }
.app.current::before {
  content: ""; position: absolute; left: 3px; top: 5px; width: 49px; height: 49px;
  border-radius: 6px; background: #f9f9f9; border: 1px solid #e5e5e5;
}
.app.current svg { position: relative; width: 36px; height: 36px; margin: -6px 0 0 6px; }
.app.open::after, .app.current::after {
  content: ""; position: absolute; left: calc(50% - 4px); bottom: 6px;
  width: 8px; height: 4px; border-radius: 2px; background: #888;
}
.app.current::after { left: calc(50% - 10px); width: 20px; background: #0878d4; }
.tray { margin-left: auto; padding: 0 24px 2px 0; display: flex; align-items: center; }
.tray svg { width: 20px; height: 20px; }
.tray svg:nth-child(2) { margin-left: 19px; }
.tray svg:nth-child(3) { margin-left: 21px; }
.tray svg:nth-child(4) { margin-left: 10px; }
.tray svg:nth-child(5) { margin-left: 11px; }
.clock { width: 89px; text-align: right; font-size: 14.200px; letter-spacing: 0.15px; }
```
